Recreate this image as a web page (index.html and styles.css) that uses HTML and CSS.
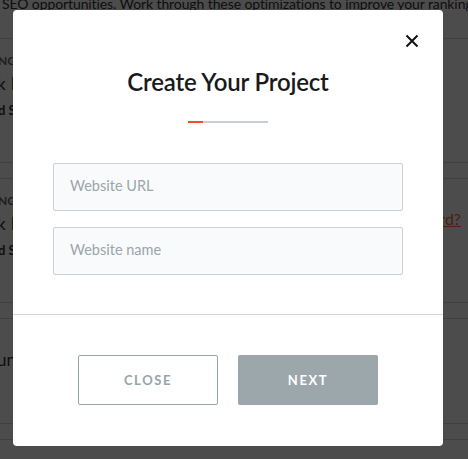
FILE: index.html
```html
<!DOCTYPE html>
<html>
<head>
<meta charset="utf-8">
<meta name="viewport" content="width=device-width, initial-scale=1.0">
<title>Create Your Project</title>
<link rel="stylesheet" href="styles.css">
</head>
<body>
<div class="page">
<p class="intro">SEO opportunities. Work through these optimizations to improve your rankings and traffic.</p>
<div class="card">
<div class="label">NG SCORE</div>
<div class="line">k links to your pages</div>
<div class="meta">d Search volume</div>
</div>
<div class="card">
<div class="label">NG SCORE</div>
<div class="line row">k links to your pages <a href="#" class="link">Forgot password?</a></div>
<div class="meta">d Search volume</div>
</div>
<div class="card card-short">
<div class="line">un your first audit</div>
</div>
<div class="card"></div>
</div>

<div class="overlay">
<div class="modal">
<button class="close" aria-label="Close">
<svg width="14" height="14" viewBox="0 0 14 14"><path d="M1.5 1.5 L12.5 12.5 M12.5 1.5 L1.5 12.5" stroke="#111" stroke-width="2" fill="none"/></svg>
</button>
<div class="modal-body">
<h1 class="title">Create Your Project</h1>
<div class="steps"><span class="steps-done"></span></div>
<form class="fields">
<input type="text" class="field" placeholder="Website URL">
<input type="text" class="field" placeholder="Website name">
</form>
</div>
<div class="modal-footer">
<button class="btn btn-outline">CLOSE</button>
<button class="btn btn-fill">NEXT</button>
</div>
</div>
</div>
</body>
</html>
```

FILE: styles.css
```css
body {
  margin: 0;
  background: #fff;
  font-family: Lato, "Open Sans", sans-serif;
  color: #333;
  overflow: hidden;
}
*, *:before, *:after { box-sizing: border-box; }

.page {
  margin-top: -7px;
  width: 468px;
  height: 466px;
  overflow: hidden;
}
.intro {
  margin: 0 0 23px 2px;
  font-size: 14px;
  line-height: 22px;
  letter-spacing: -0.1px;
  white-space: nowrap;
  overflow: hidden;
}
.card {
  border-top: 1px solid #d8d8d8;
  border-bottom: 1px solid #d8d8d8;
  height: 125px;
  margin-bottom: 15px;
  padding-top: 15px;
  overflow: hidden;
}
.card-short { height: 106px; padding-top: 25px; }
.label {
  font-size: 12px;
  font-weight: 700;
  line-height: 14px;
  margin-left: -2px;
  color: #666;
}
.line {
  font-size: 17px;
  line-height: 22px;
  margin-top: 5px;
  margin-left: -3px;
  white-space: nowrap;
  word-spacing: 1px;
}
.row {
  display: flex;
  justify-content: space-between;
  align-items: flex-start;
  padding-right: 7px;
}
.link {
  color: #ff6a3d;
  font-size: 16px;
  line-height: 18px;
  margin-top: -3px;
}
.meta {
  font-size: 13px;
  font-weight: 700;
  line-height: 16px;
  margin-top: 7px;
  margin-left: -2px;
}

.overlay {
  position: fixed;
  inset: 0;
  background: rgba(0, 0, 0, 0.7);
  display: flex;
  align-items: flex-start;
  padding: 10px 0 0 13px;
}
.modal {
  position: relative;
  width: 430px;
  height: 436px;
  background: #fff;
  border-radius: 4px;
}
.close {
  position: absolute;
  top: 24px;
  right: 24px;
  width: 14px;
  height: 14px;
  padding: 0;
  border: 0;
  background: none;
  line-height: 0;
}
.modal-body {
  padding: 57px 40px 39px;
  border-bottom: 1px solid #d6d6d6;
  display: flex;
  flex-direction: column;
  align-items: center;
}
.title {
  margin: 0;
  font-size: 24px;
  line-height: 30px;
  font-weight: 600;
  color: #1a1a1a;
  letter-spacing: -0.2px;
}
.steps {
  width: 80px;
  height: 2px;
  margin-top: 24px;
  background: #c9d0d4;
}
.steps-done {
  display: block;
  width: 15px;
  height: 2px;
  background: #f4511e;
}
.fields {
  margin-top: 40px;
  width: 350px;
  display: flex;
  flex-direction: column;
  gap: 16px;
}
.field {
  height: 48px;
  border: 1px solid #cdd1d4;
  border-radius: 2px;
  background: #f9fafb;
  padding: 0 16px 3px;
  font-family: Lato, "Open Sans", sans-serif;
  font-size: 14.5px;
}
.field::placeholder { color: #9ba6a9; }

.modal-footer {
  display: flex;
  justify-content: center;
  gap: 20px;
  padding-top: 40px;
}
.btn {
  width: 140px;
  height: 50px;
  border-radius: 2px;
  font-family: Lato, "Open Sans", sans-serif;
  font-size: 13px;
  font-weight: 700;
  letter-spacing: 1.6px;
}
.btn-outline {
  background: #fff;
  border: 1px solid #95a5a6;
  color: #95a5a6;
}
.btn-fill {
  background: #9ba7aa;
  border: 0;
  color: #fff;
}
```
